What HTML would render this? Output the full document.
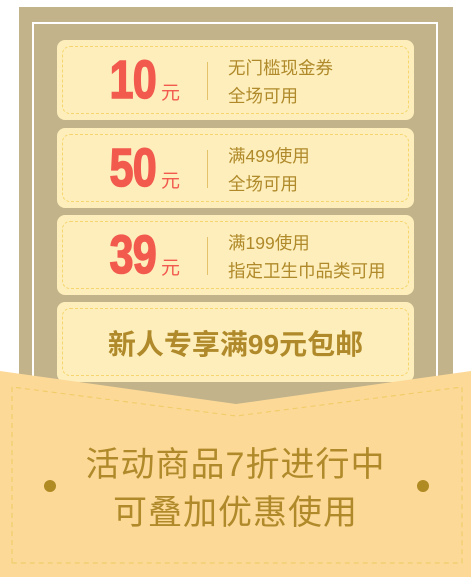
<!DOCTYPE html><html><head><meta charset="utf-8"><style>
*{margin:0;padding:0;box-sizing:border-box}
body{width:471px;height:577px;overflow:hidden;background:#fff;position:relative;font-family:"Liberation Sans","Noto Sans CJK SC",sans-serif}
.outer{position:absolute;left:19px;top:7px;width:434px;height:420px;background:#c2b38a}
.inner{position:absolute;left:32px;top:22px;width:406px;height:420px;border:2px solid #fff;border-bottom:none}
.card{position:absolute;left:57px;width:357px;height:80px;background:#fdeebb;border-radius:8px}
.card .d{position:absolute;left:5px;top:6px;right:5px;bottom:6px;border:1px dashed #f6d56e;border-radius:8px}
.num{position:absolute;left:0;width:99px;text-align:right;top:12px;color:#f25a4e;font-weight:bold;font-size:54px;line-height:56px;letter-spacing:-1px;transform:scaleX(0.8);transform-origin:right center;-webkit-text-stroke:1.5px #f25a4e}
.yuan{position:absolute;left:104px;top:38px;color:#f25a4e;font-size:19px}
.div{position:absolute;left:150px;top:22px;width:1px;height:38px;background:#e3c26a}
.txt{position:absolute;left:171px;top:14px;color:#b08a2a;font-size:17.5px;line-height:28px}
.big{position:absolute;left:0;right:0;top:21px;text-align:center;color:#b08a2a;font-size:28px;font-weight:bold;letter-spacing:0}
</style></head><body>
<div class="outer"></div><div class="inner"></div>
<div class="card" style="top:40px"><div class="d"></div><div class="num">10</div><div class="yuan">元</div><div class="div"></div><div class="txt">无门槛现金券<br>全场可用</div></div>
<div class="card" style="top:128px"><div class="d"></div><div class="num">50</div><div class="yuan">元</div><div class="div"></div><div class="txt">满499使用<br>全场可用</div></div>
<div class="card" style="top:215px"><div class="d"></div><div class="num">39</div><div class="yuan">元</div><div class="div"></div><div class="txt">满199使用<br>指定卫生巾品类可用</div></div>
<div class="card" style="top:302px"><div class="d"></div><div class="big">新人专享满99元包邮</div></div>
<svg style="position:absolute;left:0;top:0" width="471" height="577">
<polygon points="0,371 236,404 471,371 471,577 0,577" fill="#fdd998"/>
<polyline points="12,563 12,387 236,416 462,387 462,563 12,563" fill="none" stroke="#f0cd6a" stroke-width="1.2" stroke-dasharray="5,4"/>
<circle cx="50" cy="486" r="6" fill="#b08a22"/><circle cx="423" cy="486" r="6" fill="#b08a22"/>
</svg>
<div style="position:absolute;left:0;width:471px;top:441px;text-align:center;color:#b08a2a;font-size:34px;line-height:48px;letter-spacing:1px">活动商品7折进行中<br>可叠加优惠使用</div>
</body></html>
